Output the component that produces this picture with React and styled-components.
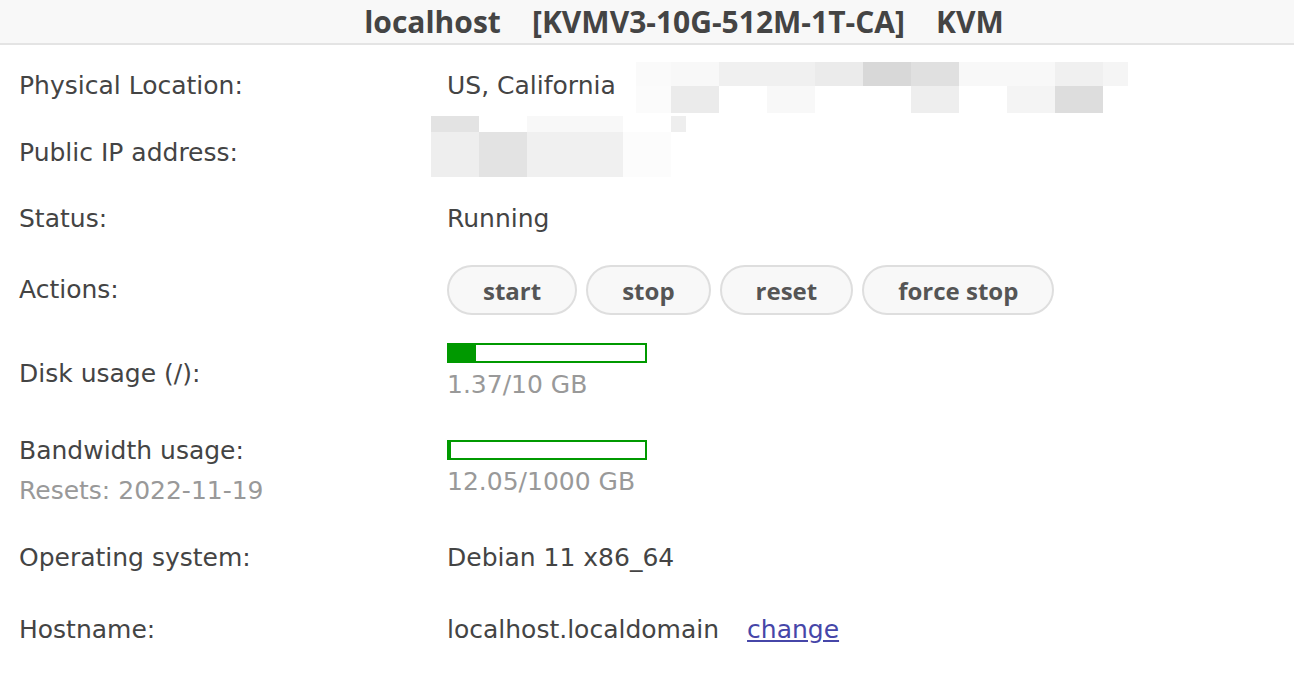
import React from "react";
import styled, { createGlobalStyle } from "styled-components";

const Global = createGlobalStyle`
  body {
    margin: 0;
    background: #fff;
    font-family: "DejaVu Sans", Verdana, sans-serif;
    color: #444;
  }
`;

const Header = styled.div`
  height: 43px;
  box-sizing: content-box;
  padding-left: 74px;
  background: #f8f8f8;
  border-bottom: 2px solid #e4e4e4;
  display: flex;
  align-items: center;
  justify-content: center;
  font-family: "Open Sans", "Noto Sans", sans-serif;
  font-weight: 700;
  font-size: 30px;
  color: #444;
  white-space: pre;
`;

const Table = styled.div`
  display: grid;
  grid-template-columns: 428px 1fr;
  grid-template-rows: 82px 52px 80px 62px 106px 88px 86px 58px;
  padding-left: 19px;
`;

const Label = styled.div`
  align-self: center;
  font-size: 25px;
  line-height: 34px;
  color: #444;
`;

const Sub = styled.div`
  color: #999;
  margin-top: 6px;
`;

const Value = styled.div`
  align-self: center;
  position: relative;
  font-size: 25px;
  line-height: 34px;
  color: #444;
  display: flex;
  flex-direction: ${(p) => (p.$stack ? "column" : "row")};
  align-items: ${(p) => (p.$stack ? "flex-start" : "center")};
  margin-bottom: ${(p) => (p.$stack ? 4 : 0)}px;
`;

const Buttons = styled.div`
  display: flex;
  gap: 9px;
`;

const Btn = styled.button`
  height: 50px;
  padding: 0 34px;
  border-radius: 25px;
  border: 2px solid #dedede;
  background: #f8f8f8;
  color: #555;
  font-family: "Open Sans", "Noto Sans", sans-serif;
  font-weight: 700;
  font-size: 24px;
  cursor: pointer;
`;

const Bar = styled.div`
  width: 200px;
  height: 20px;
  box-sizing: border-box;
  border: 2px solid #009900;
  background: #fff;
  display: flex;
  margin-bottom: 5px;
`;

const Fill = styled.div`
  height: 100%;
  background: #009900;
`;

const Muted = styled.div`
  color: #999;
  line-height: 34px;
`;

const Link = styled.a`
  color: #4646a8;
  text-decoration: underline;
  margin-left: 28px;
  cursor: pointer;
`;

const Mosaic = styled.svg`
  position: absolute;
  left: ${(p) => p.$x}px;
  top: ${(p) => p.$y}px;
`;

const locCells = [
  [0, 0, 35, 24, "#fafafa"], [35, 0, 48, 24, "#f8f8f8"], [83, 0, 48, 24, "#f0f0f0"], [131, 0, 48, 24, "#f0f0f0"],
  [179, 0, 48, 24, "#ebebeb"], [227, 0, 48, 24, "#d8d8d8"], [275, 0, 48, 24, "#e0e0e0"], [323, 0, 48, 24, "#f8f8f8"],
  [371, 0, 48, 24, "#f8f8f8"], [419, 0, 48, 24, "#f0f0f0"], [467, 0, 25, 24, "#f5f5f5"],
  [0, 24, 35, 27, "#fbfbfb"], [35, 24, 48, 27, "#ebebeb"], [131, 24, 48, 27, "#f8f8f8"], [275, 24, 48, 27, "#eeeeee"],
  [371, 24, 48, 27, "#f4f4f4"], [419, 24, 48, 27, "#dddddd"],
];

const ipCells = [
  [0, 0, 48, 16, "#e3e3e3"], [96, 0, 96, 16, "#f8f8f8"], [240, 0, 15, 16, "#eeeeee"],
  [0, 16, 48, 45, "#eeeeee"], [48, 16, 48, 45, "#e3e3e3"], [96, 16, 96, 45, "#f0f0f0"], [192, 16, 48, 45, "#fcfcfc"],
];

const Cells = ({ cells, w, h, x, y }) => (
  <Mosaic $x={x} $y={y} width={w} height={h} viewBox={`0 0 ${w} ${h}`}>
    {cells.map(([cx, cy, cw, ch, c], i) => (
      <rect key={i} x={cx} y={cy} width={cw} height={ch} fill={c} />
    ))}
  </Mosaic>
);

const Usage = ({ used, total, pct }) => (
  <>
    <Bar>
      <Fill style={{ width: `${pct}%` }} />
    </Bar>
    <Muted>
      {used}/{total} GB
    </Muted>
  </>
);

export default function App() {
  return (
    <>
      <Global />
      <Header>{"localhost    [KVMV3-10G-512M-1T-CA]    KVM"}</Header>
      <Table>
        <Label>Physical Location:</Label>
        <Value>
          US, California
          <Cells cells={locCells} w={492} h={51} x={189} y={-7} />
        </Value>

        <Label>Public IP address:</Label>
        <Value style={{ height: 34 }}>
          <Cells cells={ipCells} w={255} h={61} x={-16} y={-20} />
        </Value>

        <Label>Status:</Label>
        <Value>Running</Value>

        <Label>Actions:</Label>
        <Value>
          <Buttons>
            <Btn>start</Btn>
            <Btn>stop</Btn>
            <Btn>reset</Btn>
            <Btn>force stop</Btn>
          </Buttons>
        </Value>

        <Label>Disk usage (/):</Label>
        <Value $stack>
          <Usage used="1.37" total="10" pct={14} />
        </Value>

        <Label>
          Bandwidth usage:
          <Sub>Resets: 2022-11-19</Sub>
        </Label>
        <Value $stack>
          <Usage used="12.05" total="1000" pct={1.2} />
        </Value>

        <Label>Operating system:</Label>
        <Value>Debian 11 x86_64</Value>

        <Label>Hostname:</Label>
        <Value>
          localhost.localdomain
          <Link>change</Link>
        </Value>
      </Table>
    </>
  );
}
